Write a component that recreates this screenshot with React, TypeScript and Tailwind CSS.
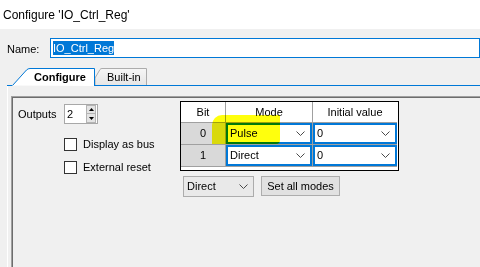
import React from "react";

const Chevron = () => (
  <svg width="9" height="6" viewBox="0 0 9 6" className="shrink-0">
    <polyline points="0.5,0.5 4.5,4.5 8.5,0.5" fill="none" stroke="#4a4a4a" strokeWidth="1" />
  </svg>
);

const CellSelect = ({ value }: { value: string }) => (
  <div className="h-full w-full border-2 border-[#0078d7] bg-white flex items-center justify-between pl-[2px] pr-[5px]">
    <span>{value}</span>
    <Chevron />
  </div>
);

export default function App() {
  return (
    <div
      className="w-[480px] h-[267px] overflow-hidden bg-[#f0f0f0] text-[11px] leading-[13px] text-black"
      style={{ fontFamily: '"Liberation Sans", Arial, sans-serif' }}
    >
      {/* Title */}
      <div className="h-[29px] bg-white pl-[3px] pt-[8px] text-[12px] leading-[14px]">
        Configure &apos;IO_Ctrl_Reg&apos;
      </div>

      {/* Name row */}
      <div className="mt-[9px] h-[20px] flex items-center">
        <div className="w-[62px] pl-[7px] pt-[2px]">Name:</div>
        <div className="w-[430px] h-[20px] border border-[#0078d7] bg-white flex items-center pl-[2px] shrink-0">
          <span className="bg-[#0078d7] text-white leading-[14px]">IO_Ctrl_Reg</span>
        </div>
      </div>

      {/* Tab strip */}
      <div className="mt-[10px] h-[18px] flex items-end">
        <div className="w-[12px] h-[1px] bg-[#0078d7] ml-0">
          <div className="w-[7px] h-[1px] bg-[#f0f0f0]" />
        </div>
        <div className="relative w-[83px] h-[18px] shrink-0">
          <svg width="83" height="18" viewBox="0 0 83 18" className="absolute inset-0">
            <path
              d="M0.5,17.5 L14.5,2 Q16,0.5 18,0.5 L82.5,0.5 L82.5,18"
              fill="#ffffff"
              stroke="#0078d7"
              strokeWidth="1"
            />
          </svg>
          <div className="relative pl-[22px] pt-[3px] font-bold">Configure</div>
        </div>
        <div className="relative w-[52px] h-[18px] shrink-0 border-b border-[#0078d7]">
          <svg width="52" height="17" viewBox="0 0 52 17" className="absolute left-0 top-0">
            <defs>
              <linearGradient id="bt" x1="0" y1="0" x2="0" y2="1">
                <stop offset="0" stopColor="#f6f6f6" />
                <stop offset="1" stopColor="#e6e6e6" />
              </linearGradient>
            </defs>
            <path
              d="M0,17 L0,10 L5,1.5 Q5.6,0.5 7,0.5 L51.5,0.5 L51.5,17"
              fill="url(#bt)"
              stroke="#acacac"
              strokeWidth="1"
            />
          </svg>
          <div className="relative pl-[12px] pt-[3px]">Built-in</div>
        </div>
        <div className="flex-1 h-[1px] bg-[#0078d7]" />
      </div>

      {/* Tab page */}
      <div className="ml-[7px] h-[181px] border-l border-white pl-[3px] pt-[10px]">
        <div className="h-full border-l border-t border-[#a0a0a0]">
          <div className="h-full border-l border-t border-[#6d6d6d] flex">
            {/* Left column */}
            <div className="w-[167px] shrink-0 flex flex-col">
              <div className="mt-[6px] h-[20px] flex items-center">
                <div className="w-[51px] pl-[5px] pt-[1px]">Outputs</div>
                <div className="w-[34px] h-[20px] border border-[#a8a8a8] bg-white flex">
                  <div className="flex-1 pl-[2px] flex items-center">2</div>
                  <div className="w-[10px] flex flex-col mr-[1px] my-[0px]">
                    <div className="h-[9px] bg-[#e4e4e4] border border-[#b4b4b4] flex items-center justify-center">
                      <svg width="5" height="3" viewBox="0 0 5 3">
                        <polygon points="2.5,0 5,3 0,3" fill="#000" />
                      </svg>
                    </div>
                    <div className="h-[9px] bg-[#e4e4e4] border border-[#b4b4b4] border-t-0 flex items-center justify-center">
                      <svg width="5" height="3" viewBox="0 0 5 3">
                        <polygon points="0,0 5,0 2.5,3" fill="#000" />
                      </svg>
                    </div>
                  </div>
                </div>
              </div>
              <div className="mt-[14px] ml-[51px] flex items-center gap-[6px]">
                <div className="w-[13px] h-[13px] border border-[#333333] bg-white" />
                <span>Display as bus</span>
              </div>
              <div className="mt-[10px] ml-[51px] flex items-center gap-[6px]">
                <div className="w-[13px] h-[13px] border border-[#333333] bg-white" />
                <span>External reset</span>
              </div>
            </div>

            {/* Right column */}
            <div className="flex flex-col">
              <div className="relative mt-[3px] w-[219px] h-[70px] border border-black bg-white">
                <div className="grid grid-cols-[44px_1px_86px_1px_84px] grid-rows-[20px_1px_21px_1px_21px_1px]">
                  <div className="flex items-center justify-center">Bit</div>
                  <div className="bg-[#a0a0a0]" />
                  <div className="flex items-center justify-center">Mode</div>
                  <div className="bg-[#a0a0a0]" />
                  <div className="flex items-center justify-center">Initial value</div>

                  <div className="col-span-5 bg-[#a0a0a0]" />

                  <div className="bg-[#d9d9d9] flex items-center justify-center">0</div>
                  <div className="bg-[#a0a0a0]" />
                  <CellSelect value="Pulse" />
                  <div className="bg-[#a0a0a0]" />
                  <CellSelect value="0" />

                  <div className="col-span-5 bg-[#a0a0a0]" />

                  <div className="bg-[#d9d9d9] flex items-center justify-center">1</div>
                  <div className="bg-[#a0a0a0]" />
                  <CellSelect value="Direct" />
                  <div className="bg-[#a0a0a0]" />
                  <CellSelect value="0" />

                  <div className="col-span-5 bg-[#a0a0a0]" />
                </div>
                {/* highlighter mark */}
                <div className="absolute left-[31px] top-[13px] w-[68px] h-[29px] bg-[#ffff00] mix-blend-multiply rounded-tl-[10px] rounded-br-[4px] opacity-95" />
              </div>
              <div className="mt-[5px] ml-[3px] flex gap-[7px]">
                <div className="w-[71px] h-[21px] border border-[#acacac] bg-[#e9e9e9] flex items-center justify-between pl-[3px] pr-[5px]">
                  <span>Direct</span>
                  <Chevron />
                </div>
                <div className="w-[79px] h-[20px] border border-[#adadad] bg-[#e1e1e1] flex items-center justify-center">
                  Set all modes
                </div>
              </div>
            </div>
          </div>
        </div>
      </div>
    </div>
  );
}
